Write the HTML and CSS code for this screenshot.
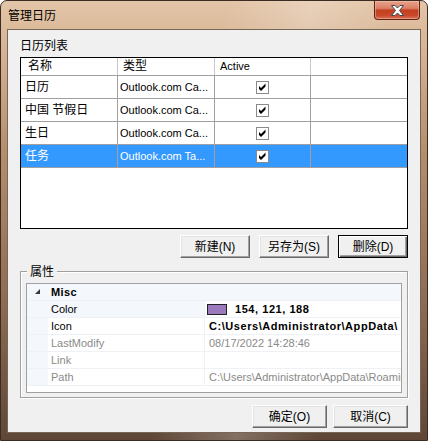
FILE: index.html
```html
<!DOCTYPE html>
<html lang="zh-CN">
<head>
<meta charset="utf-8">
<title>管理日历</title>
<link rel="stylesheet" href="styles.css">
</head>
<body>
<div class="window">
  <div class="titlebar">
    <span class="title">管理日历</span>
    <div class="close">
      <svg width="15" height="11" viewBox="0 0 15 11"><path d="M1.5 0.5 H5 L7.5 3 L10 0.5 H13.5 L9.5 5.5 L13.5 10.5 H10 L7.5 8 L5 10.5 H1.5 L5.5 5.5 Z" fill="#fff" stroke="#3d4a55" stroke-width="1"/></svg>
    </div>
  </div>
  <div class="client">
    <div class="label">日历列表</div>
    <div class="list">
      <div class="row head">
        <div class="c c1 hpad">名称</div>
        <div class="c c2 hpad">类型</div>
        <div class="c c3 hpad lat">Active</div>
        <div class="c c4"></div>
      </div>
      <div class="row">
        <div class="c c1">日历</div>
        <div class="c c2 lat">Outlook.com Ca...</div>
        <div class="c c3 mid"><svg class="chk" width="13" height="13" viewBox="0 0 13 13"><rect x="0.5" y="0.5" width="12" height="12" fill="#fff" stroke="#8a8a8a"/><path d="M3 5 L5 7 L9.5 2.5 L9.5 5.5 L5 10 L3 8 Z" fill="#000"/></svg></div>
        <div class="c c4"></div>
      </div>
      <div class="row">
        <div class="c c1">中国 节假日</div>
        <div class="c c2 lat">Outlook.com Ca...</div>
        <div class="c c3 mid"><svg class="chk" width="13" height="13" viewBox="0 0 13 13"><rect x="0.5" y="0.5" width="12" height="12" fill="#fff" stroke="#8a8a8a"/><path d="M3 5 L5 7 L9.5 2.5 L9.5 5.5 L5 10 L3 8 Z" fill="#000"/></svg></div>
        <div class="c c4"></div>
      </div>
      <div class="row">
        <div class="c c1">生日</div>
        <div class="c c2 lat">Outlook.com Ca...</div>
        <div class="c c3 mid"><svg class="chk" width="13" height="13" viewBox="0 0 13 13"><rect x="0.5" y="0.5" width="12" height="12" fill="#fff" stroke="#8a8a8a"/><path d="M3 5 L5 7 L9.5 2.5 L9.5 5.5 L5 10 L3 8 Z" fill="#000"/></svg></div>
        <div class="c c4"></div>
      </div>
      <div class="row sel">
        <div class="c c1">任务</div>
        <div class="c c2 lat">Outlook.com Ta...</div>
        <div class="c c3 mid"><svg class="chk" width="13" height="13" viewBox="0 0 13 13"><rect x="0.5" y="0.5" width="12" height="12" fill="#fff" stroke="#8a8a8a"/><path d="M3 5 L5 7 L9.5 2.5 L9.5 5.5 L5 10 L3 8 Z" fill="#000"/></svg></div>
        <div class="c c4"></div>
      </div>
    </div>
    <div class="btnrow top">
      <button class="btn">新建(N)</button>
      <button class="btn">另存为(S)</button>
      <button class="btn default">删除(D)</button>
    </div>
    <div class="group">
      <div class="group-title">属性</div>
      <div class="pg">
        <div class="pg-row cat">
          <div class="pg-margin"><svg width="6" height="6" viewBox="0 0 6 6"><path d="M5 0 V5 H0 Z" fill="#3a3a3a"/></svg></div>
          <div class="pg-name bold">Misc</div>
        </div>
        <div class="pg-row">
          <div class="pg-margin"></div>
          <div class="pg-name pale">Color</div>
          <div class="pg-val"><span class="swatch"></span><b class="wideb">154, 121, 188</b></div>
        </div>
        <div class="pg-row">
          <div class="pg-margin"></div>
          <div class="pg-name">Icon</div>
          <div class="pg-val"><b class="wideb">C:\Users\Administrator\AppData\</b></div>
        </div>
        <div class="pg-row ro">
          <div class="pg-margin"></div>
          <div class="pg-name">LastModify</div>
          <div class="pg-val">08/17/2022 14:28:46</div>
        </div>
        <div class="pg-row ro">
          <div class="pg-margin"></div>
          <div class="pg-name">Link</div>
          <div class="pg-val"></div>
        </div>
        <div class="pg-row ro">
          <div class="pg-margin"></div>
          <div class="pg-name">Path</div>
          <div class="pg-val">C:\Users\Administrator\AppData\Roamin</div>
        </div>
      </div>
    </div>
    <div class="btnrow bottom">
      <button class="btn wide">确定(O)</button>
      <button class="btn wide">取消(C)</button>
    </div>
  </div>
</div>
</body>
</html>
```

FILE: styles.css
```css
* { box-sizing: border-box; }
html, body { margin: 0; padding: 0; background: #fff; }
body {
  font-family: "Liberation Sans", "Noto Sans CJK SC", sans-serif;
  font-size: 12px;
  color: #000;
}
.window {
  width: 428px;
  height: 441px;
  border: 1px solid #3a2c22;
  border-radius: 7px 7px 0 0;
  padding: 0 6px 7px 6px;
  display: flex;
  flex-direction: column;
  background:
    linear-gradient(100deg, rgba(255,255,255,0) 45%, rgba(255,255,255,0.22) 62%, rgba(255,255,255,0) 78%),
    linear-gradient(to bottom, #e3c5a8 0px, #dcbb9c 28px, #b58e6c 150px, #8e6c52 300px, #5e4636 441px);
  overflow: hidden;
}
.titlebar {
  height: 28px;
  display: flex;
  justify-content: space-between;
  align-items: flex-start;
  flex: none;
}
.title {
  padding: 7px 0 0 1px;
  line-height: 16px;
  font-size: 12px;
  color: #000;
}
.close {
  width: 46px;
  height: 19px;
  margin-right: 1px;
  border: 1px solid #5e2418;
  border-top: none;
  border-radius: 0 0 4px 4px;
  background: linear-gradient(to bottom, #e8a48e 0%, #dd8066 40%, #c2401f 52%, #c9492a 80%, #d9735a 100%);
  box-shadow: inset 0 0 0 1px rgba(255,200,180,0.45);
  display: flex;
  align-items: center;
  justify-content: center;
}
.client {
  width: 414px;
  height: 404px;
  border: 1px solid #766656;
  background: #f0f0f0;
  padding: 8px 12px 4px 12px;
  flex: none;
}
.label {
  line-height: 16px;
  height: 16px;
  margin-bottom: 3px;
}
.list {
  height: 172px;
  border: 1px solid #000;
  background: #fff;
}
.row {
  display: flex;
  height: 23px;
  border-bottom: 1px solid #a0a0a0;
}
.row.head {
  height: 18px;
}
.c {
  border-right: 1px solid #a0a0a0;
  line-height: 22px;
  white-space: nowrap;
  overflow: hidden;
  padding-left: 4px;
}
.head .c { line-height: 17px; border-right-color: #c8c8c8; }
.c1 { width: 97px; }
.c2 { width: 97px; padding-left: 2px; }
.c3 { width: 96px; }
.c4 { width: 96px; border-right: none; }
.hpad.c1 { padding-left: 7px; }
.hpad.c2, .hpad.c3 { padding-left: 5px; }
.lat { font-size: 11px; }
.mid {
  display: flex;
  align-items: center;
  justify-content: center;
  padding-left: 0;
}
.chk { display: block; }
.row.sel { background: #3399ff; color: #fff; }
.btnrow {
  display: flex;
  justify-content: flex-end;
  gap: 9px;
}
.btnrow.top { margin-top: 6px; }
.btnrow.bottom { margin-top: 7px; gap: 6px; }
.btn {
  width: 70px;
  height: 23px;
  padding: 0;
  margin: 0;
  font-family: "Liberation Sans", "Noto Sans CJK SC", sans-serif;
  font-size: 12px;
  color: #000;
  background: #f0f0f0;
  border: 1px solid;
  border-color: #fff #696969 #696969 #fff;
  box-shadow: inset -1px -1px 0 #a0a0a0, inset 1px 1px 0 #e3e3e3;
  line-height: 20px;
}
.btn.wide { width: 75px; }
.btn.default {
  border: 1px solid #000;
  box-shadow: inset 1px 1px 0 #fff, inset -1px -1px 0 #696969, inset -2px -2px 0 #a0a0a0;
}
.group {
  margin-top: 13px;
  height: 127px;
  border: 1px solid #a0a0a0;
  box-shadow: inset 1px 1px 0 #fff, 1px 1px 0 #fff;
}
.group-title {
  margin: -8px 0 0 6px;
  padding: 0 3px;
  width: fit-content;
  line-height: 16px;
  height: 16px;
  background: #f0f0f0;
}
.pg {
  margin: 3px 0 0 5px;
  width: 376px;
  height: 110px;
  border: 1px solid #a0a0a0;
  background: #fff;
  font-size: 11px;
}
.pg-row {
  display: flex;
  height: 17px;
  border-bottom: 1px solid #eef1f5;
  line-height: 16px;
}
.pg-margin {
  width: 21px;
  background: #f4f7fb;
  display: flex;
  align-items: center;
  justify-content: flex-end;
  padding-right: 7px;
}
.pg-row.cat { background: #f4f7fb; }
.pg-name {
  width: 157px;
  padding-left: 3px;
  border-right: 1px solid #eef1f5;
  white-space: nowrap;
  color: #000;
}
.cat .pg-name { border-right: none; }
.pg-name.pale { background: #f4f7fb; }
.bold { font-weight: bold; letter-spacing: 0.4px; }
.pg-val {
  flex: 1;
  padding-left: 4px;
  white-space: nowrap;
  overflow: hidden;
  display: flex;
  align-items: center;
}
.wideb { letter-spacing: 0.55px; }
.swatch {
  display: inline-block;
  width: 20px;
  height: 11px;
  margin-left: -2px;
  margin-right: 8px;
  background: rgb(154, 121, 188);
  border: 1px solid #222;
  flex: none;
}
.ro .pg-name, .ro .pg-val { color: #8a8a8a; }
```
